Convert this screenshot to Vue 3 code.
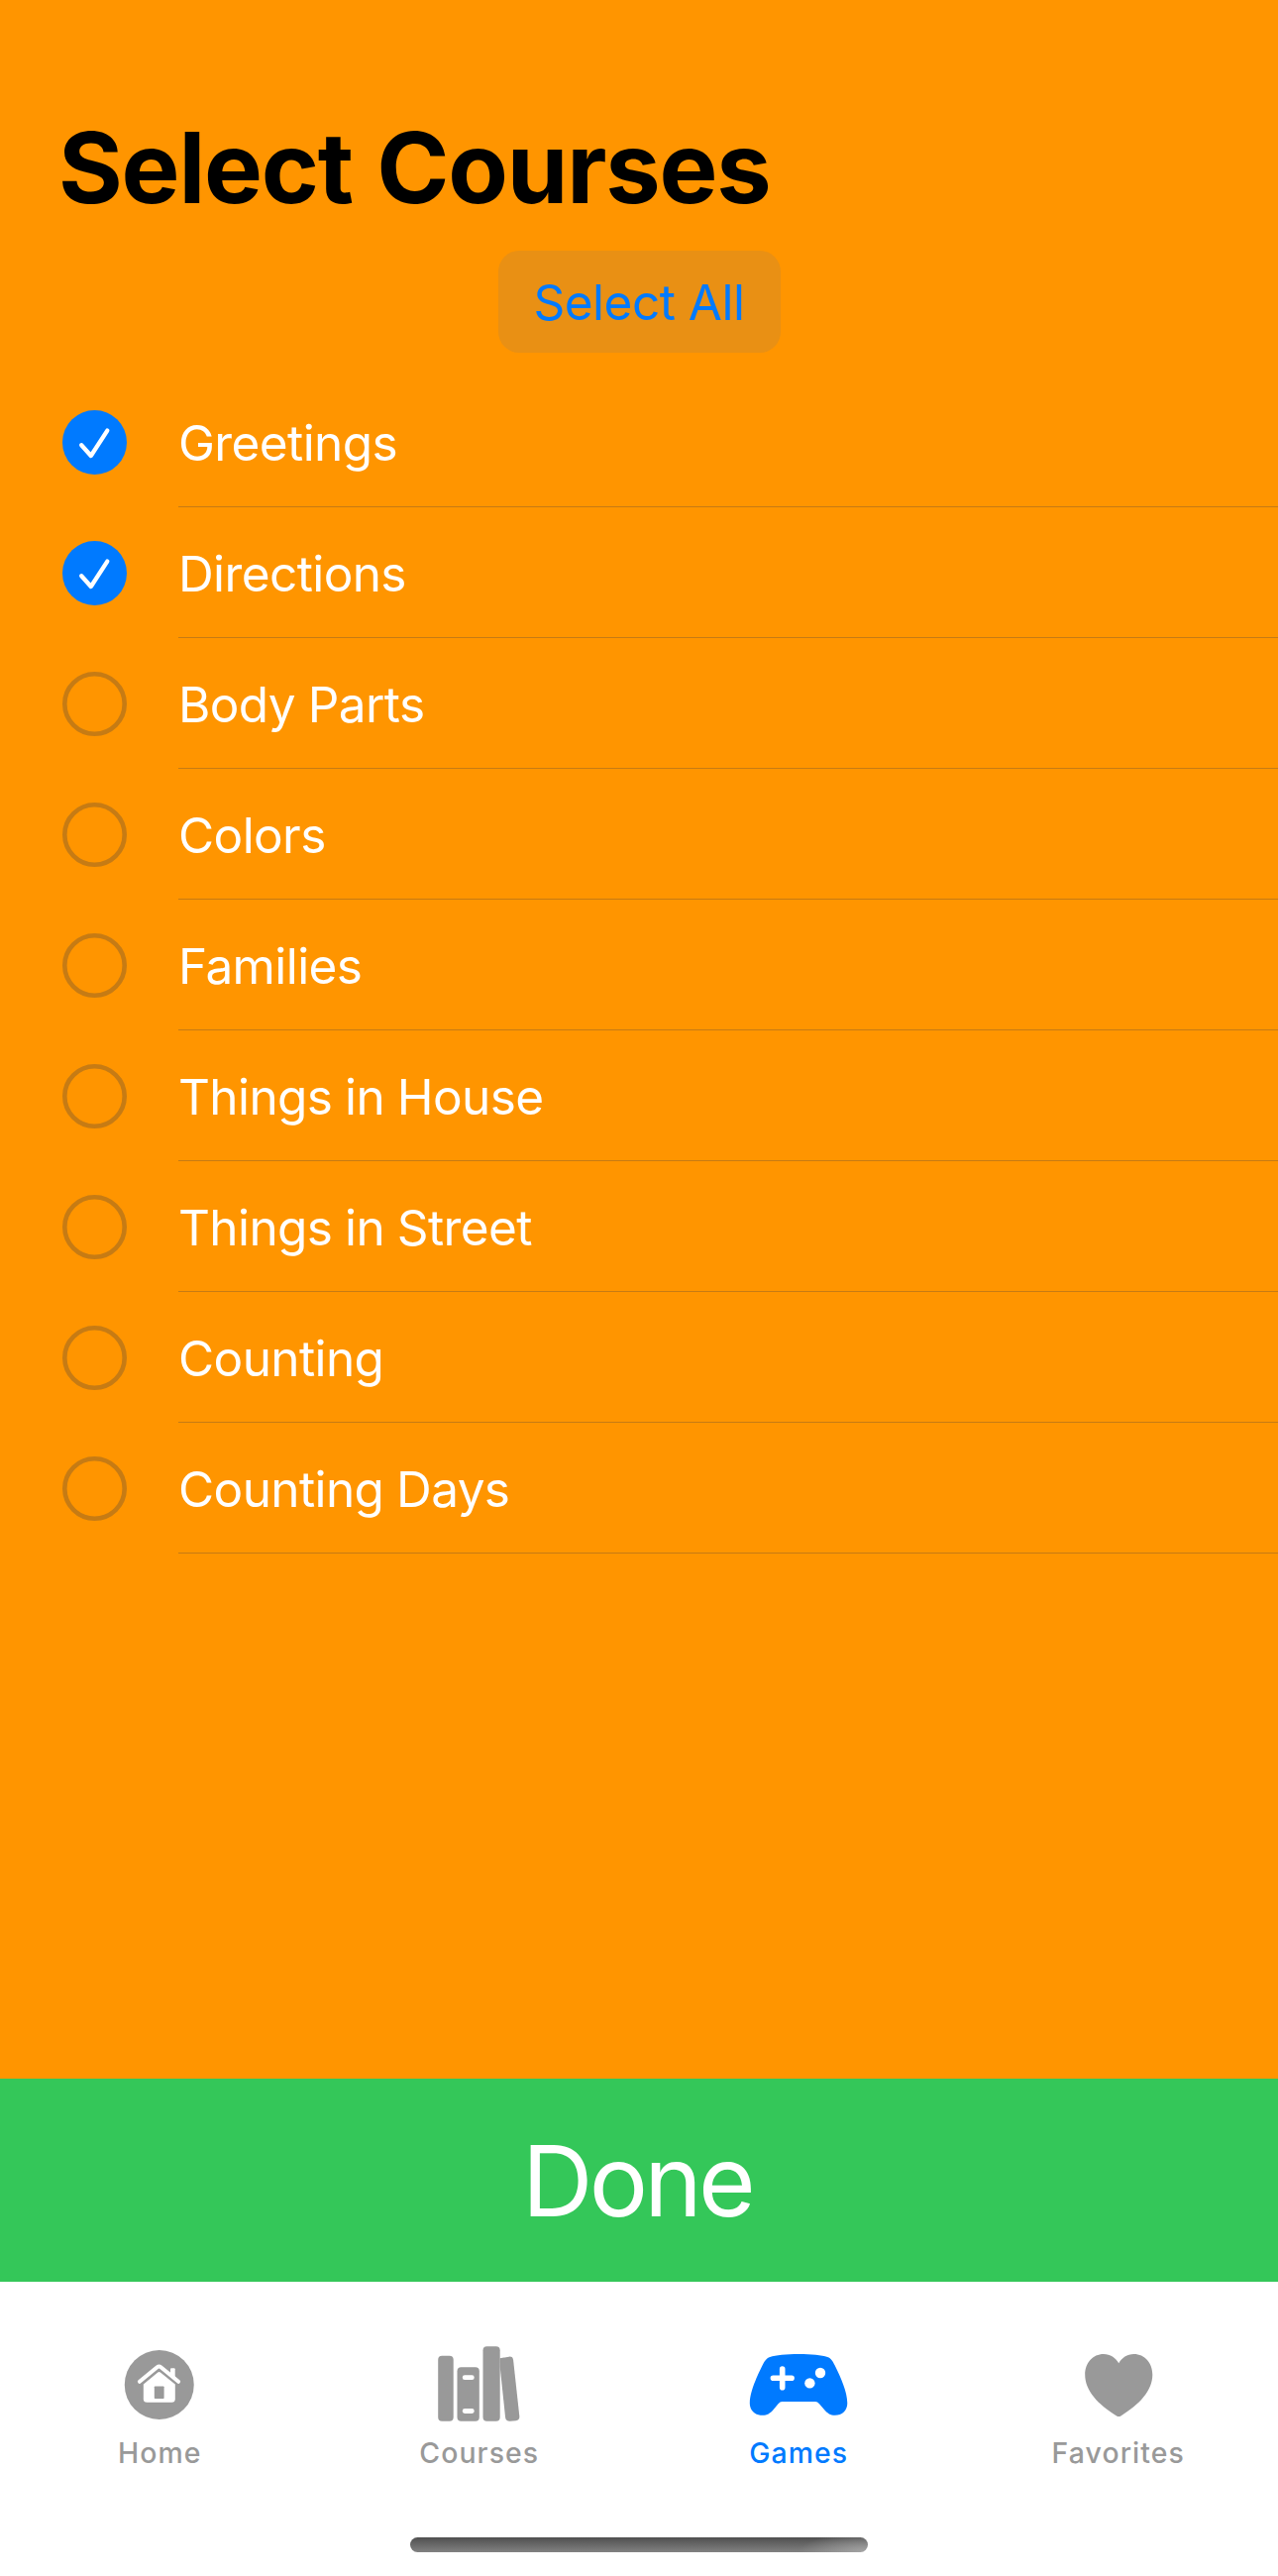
<script setup>
import { ref } from 'vue'

const courses = ref([
  { name: 'Greetings', selected: true },
  { name: 'Directions', selected: true },
  { name: 'Body Parts', selected: false },
  { name: 'Colors', selected: false },
  { name: 'Families', selected: false },
  { name: 'Things in House', selected: false },
  { name: 'Things in Street', selected: false },
  { name: 'Counting', selected: false },
  { name: 'Counting Days', selected: false }
])

const selectAll = () => courses.value.forEach((c) => { c.selected = true })
</script>

<template>
  <div class="screen">
    <main class="content">
      <h1 class="title">Select Courses</h1>
      <button class="select-all" @click="selectAll"><span>Select All</span></button>
      <ul class="list">
        <li v-for="c in courses" :key="c.name" class="row" @click="c.selected = !c.selected">
          <svg class="check" viewBox="0 0 65 65">
            <template v-if="c.selected">
              <circle cx="32.5" cy="32.5" r="32.5" fill="#007aff" />
              <path d="M19.2 35.2 L28.8 46 L45.3 20.6" fill="none" stroke="#fff" stroke-width="4.3" stroke-linecap="round" stroke-linejoin="round" />
            </template>
            <circle v-else cx="32.5" cy="32.5" r="30.2" fill="none" stroke="#c67b14" stroke-width="4.6" />
          </svg>
          <span class="name"><span>{{ c.name }}</span></span>
        </li>
      </ul>
    </main>
    <button class="done"><span>Done</span></button>
    <nav class="tabs">
      <a class="tab home">
        <svg viewBox="0 0 100 84">
          <circle cx="49.75" cy="42" r="35" fill="currentColor" />
          <path d="M29.9 38.8 L47.6 24.3 Q49.5 22.8 51.4 24.3 L69.1 38.8" fill="none" stroke="#fff" stroke-width="4" stroke-linecap="round" stroke-linejoin="round" />
          <path d="M61 33 V26.3 Q61 25.3 62 25.3 H64.7 Q65.7 25.3 65.7 26.3 V37 Z" fill="#fff" />
          <path d="M33.8 41.6 L48.3 29.6 Q49.6 28.6 50.9 29.6 L65.8 41.6 V56.2 Q65.8 59.7 62.3 59.7 H37.3 Q33.8 59.7 33.8 56.2 Z" fill="#fff" />
          <rect x="44.8" y="43.5" width="9.8" height="12.6" rx=".8" fill="currentColor" />
        </svg>
        <span>Home</span>
      </a>
      <a class="tab courses">
        <svg viewBox="0 0 100 84">
          <g fill="currentColor">
            <rect x="8.2" y="12.7" width="15.5" height="66" rx="4" />
            <rect x="27.5" y="24.3" width="22.3" height="54.4" rx="4" />
            <rect x="53.5" y="3.3" width="17.2" height="75.4" rx="4" />
            <path d="M70.6 15.3 L79.6 13.7 Q83.6 13.1 84.1 17.1 L90.3 73.6 Q90.7 77.6 86.7 78.2 L80.9 78.8 Q76.6 79 76.1 75 L70.7 24 Z" />
          </g>
          <rect x="32.8" y="32.2" width="11.9" height="4.8" rx="2.3" fill="#fff" />
          <rect x="32.8" y="66.1" width="11.9" height="4.8" rx="2.3" fill="#fff" />
        </svg>
        <span>Courses</span>
      </a>
      <a class="tab games active">
        <svg viewBox="0 0 100 84">
          <path d="M50.3 10.9 C63 10.9 73.5 11.8 79.2 14 C83.2 15.5 84.4 18 86.7 22.5 C92.8 34.5 99.3 49.5 99.3 60.5 C99.3 68 94 72.8 86.8 72.8 C82 72.8 79.4 70.6 76.4 67.4 L71 61.3 Q69.1 59 67 59 H33.4 Q31.5 59 29.5 61.3 L24.3 67.4 C21.3 70.6 18.5 72.8 13.7 72.8 C6.2 72.8 .8 68 .8 60.5 C.8 49.5 7.6 34.5 13.5 22.5 C15.8 18 17.2 15.5 21.2 14 C27 11.8 37.5 10.9 50.3 10.9 Z" fill="currentColor" />
          <path d="M24.4 35.3 H43.1 M33.7 26 V44.7" stroke="#fff" stroke-width="5.6" stroke-linecap="round" />
          <circle cx="72" cy="30" r="5.2" fill="#fff" />
          <circle cx="61.4" cy="40.4" r="5.2" fill="#fff" />
        </svg>
        <span>Games</span>
      </a>
      <a class="tab favorites">
        <svg viewBox="0 0 100 84">
          <path d="M50.25 20.2 C47.2 14.8 41.7 11 35 11 C24 11 16.2 20 16.2 31.8 C16.2 48 29.5 62 47.8 73.2 Q50.25 74.9 52.7 73.2 C71 62 84.3 48 84.3 31.8 C84.3 20 76.5 11 65.5 11 C58.8 11 53.3 14.8 50.25 20.2 Z" fill="currentColor" />
        </svg>
        <span>Favorites</span>
      </a>
    </nav>
    <div class="bottom"><div class="indicator"></div></div>
  </div>
</template>

<style>
body {
  margin: 0;
}
</style>

<style scoped>
.screen {
  width: 1290px;
  height: 2600px;
  display: flex;
  flex-direction: column;
  overflow: hidden;
  background: #fff;
  font-family: Inter, "Liberation Sans", sans-serif;
}
button {
  box-sizing: border-box;
  border: 0;
  padding: 0;
  margin: 0;
  font: inherit;
}
.content {
  box-sizing: border-box;
  height: 2098px;
  padding-top: 109px;
  background: #ff9500;
  display: flex;
  flex-direction: column;
}
.title {
  margin: 0 0 24px 59px;
  font-size: 99px;
  line-height: 120px;
  font-weight: 700;
  letter-spacing: -1.2px;
  word-spacing: 2px;
  color: #000;
}
.select-all {
  align-self: center;
  width: 285px;
  height: 103px;
  padding-top: 1px;
  border-radius: 21px;
  background: #e99014;
  color: #007aff;
  font-size: 49.5px;
  line-height: 102px;
  letter-spacing: -0.5px;
}
.list {
  list-style: none;
  margin: 24px 0 0;
  padding: 0;
}
.row {
  display: flex;
  align-items: center;
  height: 132px;
  padding-left: 63px;
}
.check {
  width: 65px;
  height: 65px;
  flex: none;
  margin-top: 1px;
}
.name {
  box-sizing: border-box;
  flex: 1;
  height: 132px;
  margin-left: 52px;
  padding-top: 3px;
  border-bottom: 1px solid #c67b14;
  color: #fff;
  font-size: 49.5px;
  line-height: 128px;
  letter-spacing: -0.6px;
  word-spacing: -0.6px;
}
.done {
  height: 205px;
  padding: 2px 4px 0 0;
  background: #34c759;
  color: #fff;
  font-size: 99px;
  line-height: 203px;
  letter-spacing: -3.8px;
}
.tabs {
  box-sizing: border-box;
  height: 230px;
  padding-top: 62px;
  display: flex;
}
.tab {
  flex: 1;
  display: flex;
  flex-direction: column;
  align-items: center;
  gap: 7px;
  color: #999;
  font-size: 28.4px;
  line-height: 40px;
  font-weight: 500;
  letter-spacing: 1.1px;
}
.tab svg {
  width: 100px;
  height: 84px;
}
.active {
  color: #007aff;
}
.bottom {
  display: flex;
  justify-content: center;
  padding-top: 28px;
}
.indicator {
  width: 462px;
  height: 15px;
  border-radius: 8px;
  background:
    radial-gradient(ellipse 70px 20px at 100% 100%, rgba(175, 175, 175, 0.8), rgba(175, 175, 175, 0)),
    linear-gradient(#4f4f4f, #828282);
}
</style>
